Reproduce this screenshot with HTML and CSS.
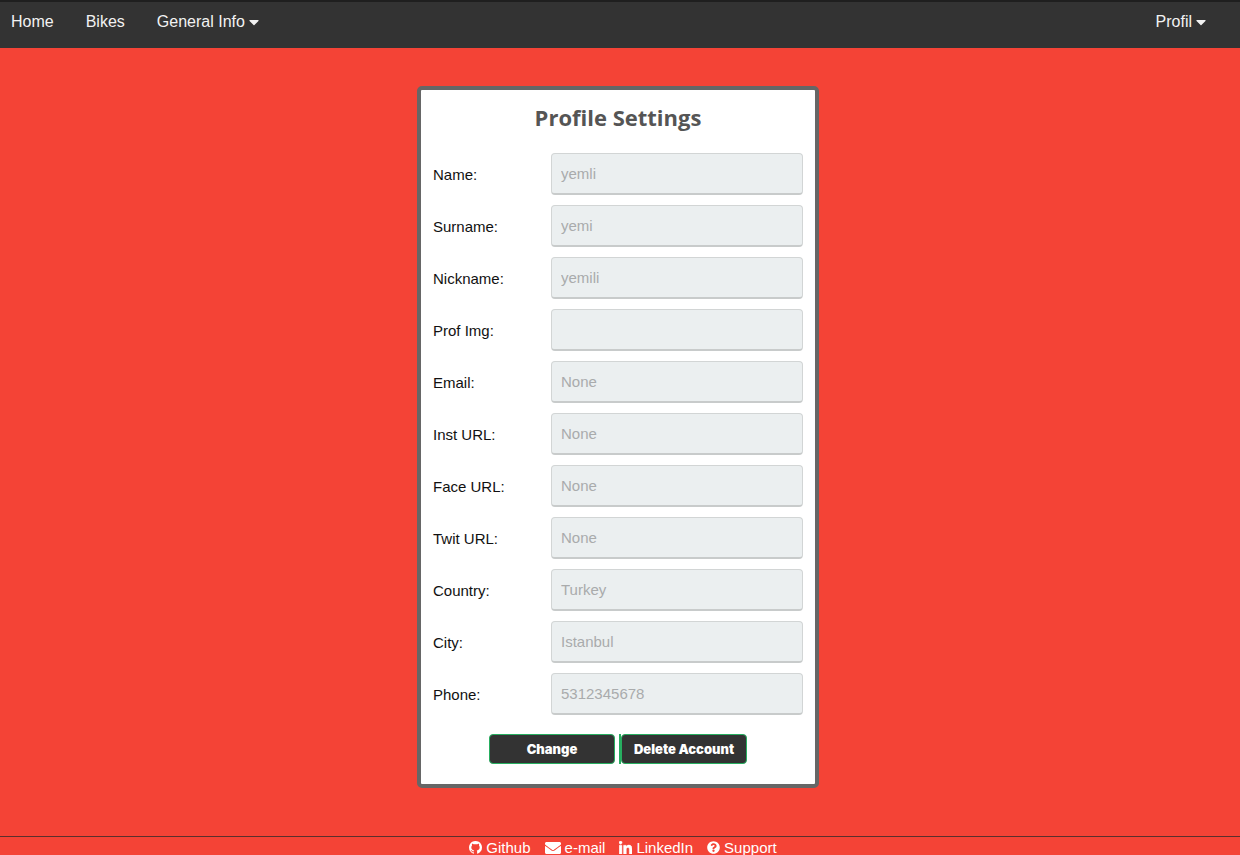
FILE: index.html
```html
<!DOCTYPE html>
<html lang="en">
<head>
<meta charset="utf-8">
<title>Profile Settings</title>
<link rel="stylesheet" href="styles.css">
</head>
<body>
<nav class="navbar">
  <a class="nav-link" href="#">Home</a>
  <a class="nav-link" href="#">Bikes</a>
  <button class="nav-link" type="button">General Info <svg class="caret" viewBox="0 0 320 512" aria-hidden="true"><path d="M31.3 192h257.3c17.8 0 26.7 21.5 14.1 34.1L174.1 354.8c-7.8 7.8-20.5 7.8-28.3 0L17.2 226.1C4.6 213.5 13.5 192 31.3 192z"/></svg></button>
  <button class="nav-link nav-profile" type="button">Profil <svg class="caret" viewBox="0 0 320 512" aria-hidden="true"><path d="M31.3 192h257.3c17.8 0 26.7 21.5 14.1 34.1L174.1 354.8c-7.8 7.8-20.5 7.8-28.3 0L17.2 226.1C4.6 213.5 13.5 192 31.3 192z"/></svg></button>
</nav>
<main class="content">
  <form class="card">
    <h1 class="title">Profile Settings</h1>
    <div class="fields">
      <label for="name">Name:</label><input id="name" type="text" placeholder="yemli">
      <label for="surname">Surname:</label><input id="surname" type="text" placeholder="yemi">
      <label for="nickname">Nickname:</label><input id="nickname" type="text" placeholder="yemili">
      <label for="image">Prof Img:</label><input id="image" type="text">
      <label for="email">Email:</label><input id="email" type="text" placeholder="None">
      <label for="inst">Inst URL:</label><input id="inst" type="text" placeholder="None">
      <label for="face">Face URL:</label><input id="face" type="text" placeholder="None">
      <label for="twit">Twit URL:</label><input id="twit" type="text" placeholder="None">
      <label for="country">Country:</label><input id="country" type="text" placeholder="Turkey">
      <label for="city">City:</label><input id="city" type="text" placeholder="Istanbul">
      <label for="phone">Phone:</label><input id="phone" type="text" placeholder="5312345678">
    </div>
    <div class="actions">
      <button class="btn" type="submit">Change</button>
      <div class="btn-wrap"><button class="btn" type="button">Delete Account</button></div>
    </div>
  </form>
</main>
<footer class="footer">
  <a href="#"><svg class="icon" viewBox="0 128 1536 1536" aria-hidden="true"><path d="M768 128q209 0 385.500 103t279.500 279.500 103 385.500q0 251-146.500 451.500t-378.500 277.500q-27 5-40-7t-13-30q0-3 .5-76.500t.5-134.500q0-97-52-142 57-6 102.500-18t94-39 81-66.500 53-105 20.500-150.500q0-119-79-206 37-91-8-204-28-9-81 11t-92 44l-38 24q-93-26-192-26t-192 26q-16-11-42.500-27t-83.500-38.500-85-13.500q-45 113-8 204-79 87-79 206 0 85 20.500 150t52.500 105 80.500 67 94 39 102.500 18q-39 36-49 103-21 10-45 15t-57 5-65.500-21.500-55.500-62.500q-19-32-48.500-52t-49.500-24l-20-3q-21 0-29 4.500t-5 11.500 9 14 13 12l7 5q22 10 43.500 38t31.500 51l10 23q13 38 44 61.500t67 30 69.500 7 55.500-3.500l23-4q0 38 .5 88.500t.5 54.500q0 18-13 30t-40 7q-232-77-378.500-277.500t-146.500-451.500q0-209 103-385.500t279.500-279.500 385.500-103z"/></svg>Github</a>
  <a href="#"><svg class="icon icon-wide" viewBox="0 0 512 512" aria-hidden="true"><path d="M502.3 190.8c3.9-3.1 9.7-.2 9.7 4.7V400c0 26.5-21.5 48-48 48H48c-26.5 0-48-21.5-48-48V195.6c0-5 5.7-7.8 9.7-4.7 22.4 17.4 52.1 39.5 154.1 113.6 21.1 15.4 56.7 47.8 92.2 47.6 35.7.3 72-32.8 92.3-47.6 102-74.1 131.6-96.3 154-113.7zM256 320c23.2.4 56.6-29.2 73.4-41.4 132.7-96.3 142.8-104.7 173.4-128.7 5.8-4.5 9.2-11.5 9.2-18.9v-19c0-26.5-21.5-48-48-48H48c-26.5 0-48 21.5-48 48v19c0 7.4 3.4 14.3 9.2 18.9 30.6 23.9 40.7 32.4 173.4 128.7 16.8 12.2 50.2 41.8 73.4 41.4z"/></svg>e-mail</a>
  <a href="#"><svg class="icon" viewBox="0 0 448 448" aria-hidden="true"><path stroke="currentColor" stroke-width="16" d="M100.28 448H7.4V148.9h92.88zM53.79 108.1C24.09 108.1 0 83.5 0 53.8a53.79 53.79 0 0 1 107.58 0c0 29.7-24.1 54.3-53.79 54.3zM447.9 448h-92.68V302.4c0-34.7-.7-79.2-48.29-79.2-48.29 0-55.69 37.7-55.69 76.7V448h-92.78V148.9h89.08v40.8h1.3c12.4-23.5 42.69-48.3 87.88-48.3 94 0 111.28 61.9 111.28 142.3V448z"/></svg>LinkedIn</a>
  <a href="#"><svg class="icon" viewBox="0 0 512 512" aria-hidden="true"><path d="M504 256c0 136.997-111.043 248-248 248S8 392.997 8 256C8 119.083 119.043 8 256 8s248 111.083 248 248zM262.655 90c-54.497 0-89.255 22.957-116.549 63.758-3.536 5.286-2.353 12.415 2.715 16.258l34.699 26.31c5.205 3.947 12.621 3.008 16.665-2.122 17.864-22.658 30.113-35.797 57.303-35.797 20.429 0 45.698 13.148 45.698 32.958 0 14.976-12.363 22.667-32.534 33.976C247.128 238.528 216 254.941 216 296v4c0 6.627 5.373 12 12 12h56c6.627 0 12-5.373 12-12v-1.333c0-28.462 83.186-29.647 83.186-106.667 0-58.002-60.165-102-116.531-102zM256 338c-25.365 0-46 20.635-46 46 0 25.364 20.635 46 46 46s46-20.636 46-46c0-25.364-20.635-46-46-46z"/></svg>Support</a>
</footer>
</body>
</html>
```
FILE: styles.css
```css
* { box-sizing: border-box; }
body {
  margin: 0;
  min-height: 100vh;
  display: flex;
  flex-direction: column;
  background: #f44336;
  font-family: "Liberation Sans", Arial, sans-serif;
}
svg { fill: currentColor; }
.navbar {
  display: flex;
  gap: 32px;
  padding: 10px 34px 16px 11px;
  background: #333;
  border-top: 2px solid #1f1f1f;
}
.nav-link {
  display: flex;
  align-items: center;
  gap: 4px;
  padding: 0;
  border: 0;
  background: none;
  color: #f2f2f2;
  font: 16px/20px "Liberation Sans", Arial, sans-serif;
  text-decoration: none;
}
.nav-profile { margin-left: auto; }
.caret { width: 10px; height: 16px; }
.content {
  flex: 1;
  display: flex;
  justify-content: center;
  align-items: flex-start;
  padding: 38px 4px 48px 0;
}
.card {
  width: 402px;
  padding: 12px 12px 20px;
  background: #fff;
  border: 4px solid #666;
  border-radius: 5px;
}
.title {
  margin: 0 0 21px;
  color: #555;
  font: bold 22px/30px "Open Sans", "Noto Sans", sans-serif;
  text-align: center;
}
.fields {
  display: grid;
  grid-template-columns: 108px 1fr;
  column-gap: 10px;
  row-gap: 10px;
  align-items: center;
  color: #111;
  font-size: 15px;
}
.fields input {
  width: 100%;
  height: 42px;
  padding: 0 9px;
  background: #ebeff0;
  border: 1px solid #d2d5d5;
  border-bottom: 2px solid #c8cbcb;
  border-radius: 4px;
  color: #333;
  font: 15px "Liberation Sans", Arial, sans-serif;
}
.fields input::placeholder { color: #a9abac; opacity: 1; }
.actions {
  display: flex;
  justify-content: center;
  gap: 4px;
  margin-top: 19px;
}
.btn {
  display: block;
  width: 126px;
  height: 30px;
  padding: 0;
  background: #333;
  border: 1px solid #27ae60;
  border-radius: 4px;
  color: #fff;
  font: 900 13px "Inter", sans-serif;
}
.btn-wrap { border-left: 2px solid #27ae60; }
.footer {
  display: flex;
  justify-content: center;
  gap: 14px;
  padding: 3px 0 0 6px;
  border-top: 1px solid #5c2f2c;
}
.footer a {
  display: flex;
  align-items: center;
  gap: 4px;
  color: #fff;
  font-size: 15px;
  line-height: 15px;
  text-decoration: none;
}
.icon { width: 13px; height: 13px; }
.icon-wide { width: 16px; height: 16px; margin: -1px 0; }
```
